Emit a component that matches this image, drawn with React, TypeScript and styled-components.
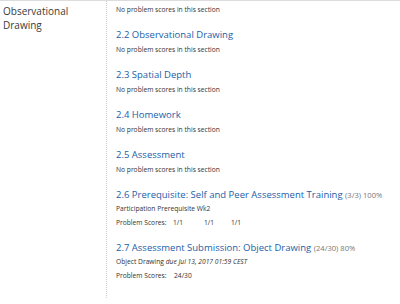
import React from "react";
import styled, { createGlobalStyle } from "styled-components";

const Global = createGlobalStyle`
  html, body { margin: 0; padding: 0; background: #fff; }
  body { font-family: "Open Sans", "Noto Sans", sans-serif; overflow: hidden; }
`;

const Page = styled.div`
  width: 400px;
  height: 304px;
  border-top: 1px solid #dcdcdc;
  box-sizing: border-box;
  display: flex;
  align-items: flex-start;
`;

const Chapter = styled.div`
  width: 106px;
  flex: none;
  box-sizing: border-box;
  padding: 3px 0 0 3px;
  font-size: 10px;
  line-height: 14px;
  color: #3a3a3a;
`;

const Sections = styled.div`
  border-left: 1px dotted #cfcfcf;
  padding: 4px 0 17px 9px;
  display: flex;
  flex-direction: column;
  flex: 1;
  min-width: 0;
`;

const Section = styled.div<{ $gap?: number }>`
  display: flex;
  flex-direction: column;
  margin-bottom: ${(p) => p.$gap ?? 13}px;
`;

const Heading = styled.div<{ $space?: number }>`
  font-size: 9.5px;
  line-height: 14px;
  color: #2160a8;
  margin-bottom: ${(p) => p.$space ?? 3}px;
  white-space: nowrap;
`;

const Score = styled.span`
  color: #777;
  font-size: 7.6px;
  line-height: 1;
`;

const Note = styled.div`
  font-size: 6.7px;
  line-height: 10px;
  color: #333;
  white-space: nowrap;
`;

const Details = styled(Note)`
  margin-bottom: 4px;
`;

const Due = styled.em`
  font-style: italic;
`;

const ScoreRow = styled.div<{ $cols: string }>`
  display: grid;
  grid-template-columns: ${(p) => p.$cols};
  font-size: 6.7px;
  line-height: 10px;
  color: #333;
  white-space: nowrap;
`;

const empty = [
  "2.2 Observational Drawing",
  "2.3 Spatial Depth",
  "2.4 Homework",
  "2.5 Assessment",
];

export default function App() {
  return (
    <>
      <Global />
      <Page>
        <Chapter>
          Observational
          <br />
          Drawing
        </Chapter>
        <Sections>
          <Section>
            <Note>No problem scores in this section</Note>
          </Section>
          {empty.map((t) => (
            <Section key={t}>
              <Heading>{t}</Heading>
              <Note>No problem scores in this section</Note>
            </Section>
          ))}
          <Section>
            <Heading $space={2}>
              2.6 Prerequisite: Self and Peer Assessment Training <Score>(3/3) 100%</Score>
            </Heading>
            <Details>Participation Prerequisite Wk2</Details>
            <ScoreRow $cols="57px 31px 27px auto">
              <span>Problem Scores:</span>
              <span>1/1</span>
              <span>1/1</span>
              <span>1/1</span>
            </ScoreRow>
          </Section>
          <Section $gap={0}>
            <Heading $space={2}>
              2.7 Assessment Submission: Object Drawing <Score>(24/30) 80%</Score>
            </Heading>
            <Details>
              Object Drawing <Due>due Jul 13, 2017 01:59 CEST</Due>
            </Details>
            <ScoreRow $cols="58px auto">
              <span>Problem Scores:</span>
              <span>24/30</span>
            </ScoreRow>
          </Section>
        </Sections>
      </Page>
    </>
  );
}
